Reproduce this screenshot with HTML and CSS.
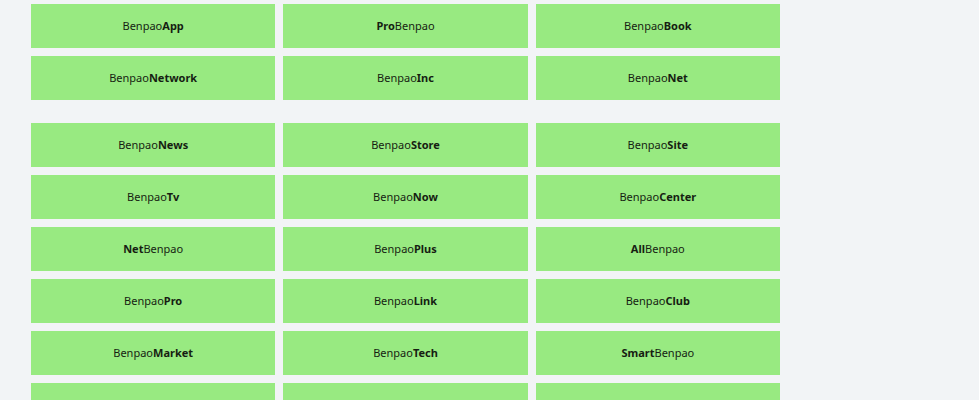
FILE: index.html
```html
<!DOCTYPE html>
<html>
<head>
<meta charset="utf-8">
<link rel="stylesheet" href="styles.css">
</head>
<body>
<div class="page">
  <div class="grid">
    <div class="card">Benpao<b>App</b></div>
    <div class="card"><b>Pro</b>Benpao</div>
    <div class="card">Benpao<b>Book</b></div>
    <div class="card">Benpao<b>Network</b></div>
    <div class="card">Benpao<b>Inc</b></div>
    <div class="card">Benpao<b>Net</b></div>
  </div>
  <div class="grid second">
    <div class="card">Benpao<b>News</b></div>
    <div class="card">Benpao<b>Store</b></div>
    <div class="card">Benpao<b>Site</b></div>
    <div class="card">Benpao<b>Tv</b></div>
    <div class="card">Benpao<b>Now</b></div>
    <div class="card">Benpao<b>Center</b></div>
    <div class="card"><b>Net</b>Benpao</div>
    <div class="card">Benpao<b>Plus</b></div>
    <div class="card"><b>All</b>Benpao</div>
    <div class="card">Benpao<b>Pro</b></div>
    <div class="card">Benpao<b>Link</b></div>
    <div class="card">Benpao<b>Club</b></div>
    <div class="card">Benpao<b>Market</b></div>
    <div class="card">Benpao<b>Tech</b></div>
    <div class="card"><b>Smart</b>Benpao</div>
    <div class="card"><b>Best</b>Benpao</div>
    <div class="card"><b>Super</b>Benpao</div>
    <div class="card">Benpao<b>Go</b></div>
  </div>
</div>
</body>
</html>
```
FILE: styles.css
```css
html, body {
  margin: 0;
  padding: 0;
  background: #f2f4f6;
  font-family: "Noto Sans", "Open Sans", sans-serif;
  color: #161e12;
}
.page {
  padding: 4px 0 0 31px;
  width: 749px;
}
.grid {
  display: grid;
  grid-template-columns: repeat(3, 1fr);
  gap: 8px;
}
.grid.second {
  margin-top: 23px;
}
.card {
  background: #98ea81;
  height: 44px;
  box-sizing: border-box;
  padding-bottom: 1px;
  display: flex;
  align-items: center;
  justify-content: center;
  font-size: 11px;
}
.card b {
  font-weight: 700;
}
```
